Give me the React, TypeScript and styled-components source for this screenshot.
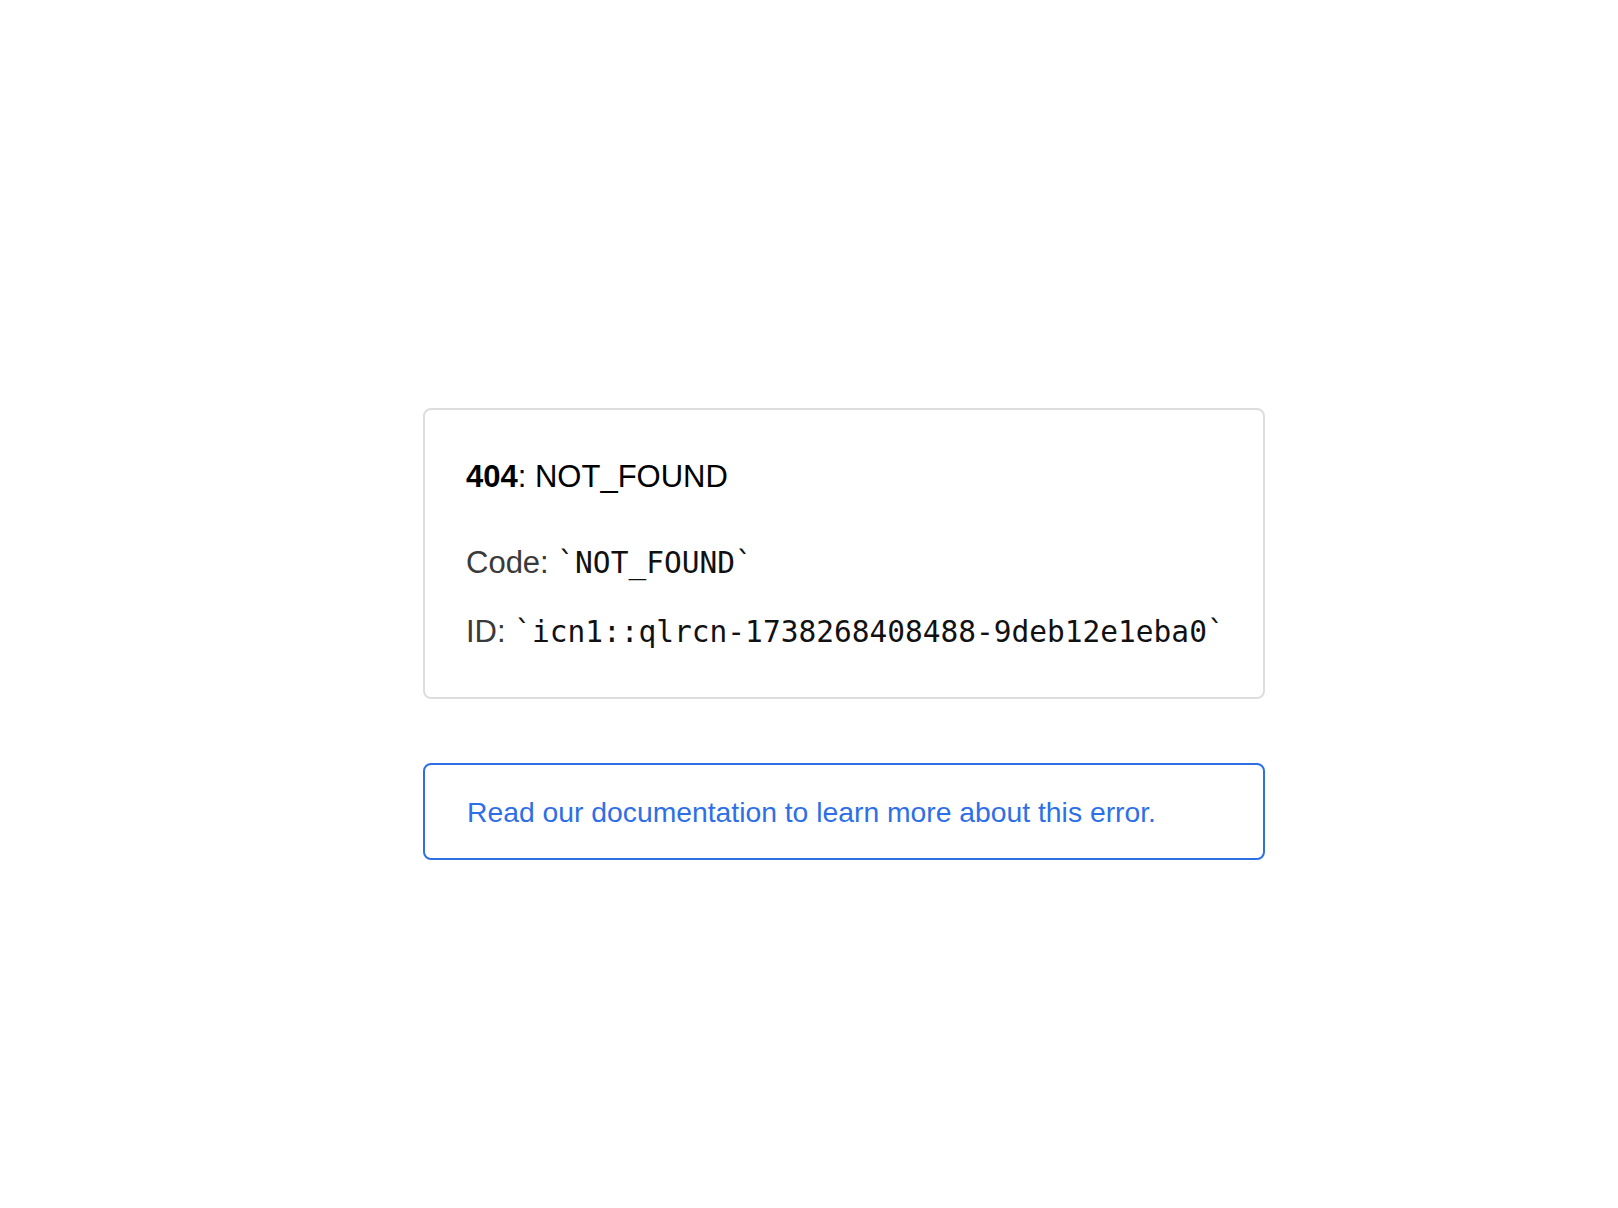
import React from "react";
import styled, { createGlobalStyle } from "styled-components";

const GlobalStyle = createGlobalStyle`
  html, body {
    margin: 0;
    padding: 0;
    background: #ffffff;
  }
  body {
    font-family: "Liberation Sans", Arial, sans-serif;
    -webkit-font-smoothing: antialiased;
  }
`;

const Page = styled.main`
  min-height: 1208px;
  display: flex;
  flex-direction: column;
  align-items: center;
  padding: 408px 0 0 70px;
  box-sizing: border-box;
`;

const Column = styled.div`
  width: 842px;
  display: flex;
  flex-direction: column;
  gap: 64px;
`;

const ErrorCard = styled.section`
  box-sizing: border-box;
  width: 100%;
  border: 2px solid #dddddd;
  border-radius: 8px;
  padding: 49px 41px 45px;
  display: flex;
  flex-direction: column;
`;

const Title = styled.h1`
  margin: 0 0 48px;
  font-size: 31px;
  line-height: 36px;
  font-weight: 400;
  color: #000000;
  white-space: nowrap;
`;

const Strong = styled.strong`
  font-weight: 700;
`;

const Detail = styled.p<{ $last?: boolean }>`
  margin: 0 0 ${(p) => (p.$last ? "0" : "29px")};
  font-size: 31px;
  line-height: 40px;
  color: #3a3a3a;
  white-space: nowrap;
`;

const Mono = styled.code`
  font-family: "DejaVu Sans Mono", "Liberation Mono", monospace;
  font-size: 29.5px;
  line-height: 40px;
  color: #111111;
`;

const DocsBox = styled.a`
  box-sizing: border-box;
  display: block;
  width: 100%;
  border: 2px solid #2e6fe8;
  border-radius: 8px;
  padding: 31px 42px 30px;
  font-size: 28.3px;
  line-height: 32px;
  color: #2e6fe8;
  text-decoration: none;
  white-space: nowrap;
`;

export default function App() {
  return (
    <>
      <GlobalStyle />
      <Page>
        <Column>
          <ErrorCard>
            <Title>
              <Strong>404</Strong>: NOT_FOUND
            </Title>
            <Detail>
              Code: <Mono>`NOT_FOUND`</Mono>
            </Detail>
            <Detail $last>
              ID: <Mono>`icn1::qlrcn-1738268408488-9deb12e1eba0`</Mono>
            </Detail>
          </ErrorCard>
          <DocsBox href="#">
            Read our documentation to learn more about this error.
          </DocsBox>
        </Column>
      </Page>
    </>
  );
}
